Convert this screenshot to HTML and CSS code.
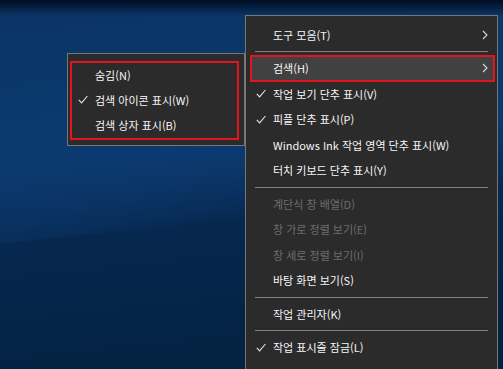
FILE: index.html
```html
<!DOCTYPE html>
<html lang="ko">
<head>
<meta charset="utf-8">
<link rel="stylesheet" href="styles.css">
</head>
<body>
<div class="desktop">
  <div class="beam"></div>

  <div class="menu main-menu">
    <div class="item"><span class="check"></span><span class="label">도구 모음(T)</span><svg class="chev" width="6" height="10" viewBox="0 0 6 10"><polyline points="1,1 5,5 1,9" fill="none" stroke="#d8d8d8" stroke-width="1.1"/></svg></div>
    <div class="sep"></div>
    <div class="item active marked"><span class="check"></span><span class="label">검색(H)</span><svg class="chev" width="6" height="10" viewBox="0 0 6 10"><polyline points="1,1 5,5 1,9" fill="none" stroke="#d8d8d8" stroke-width="1.1"/></svg></div>
    <div class="item"><span class="check"><svg width="10" height="9" viewBox="0 0 10 9"><polyline points="0.8,4.8 3.6,7.8 9.4,1" fill="none" stroke="#dce6f2" stroke-width="1.1"/></svg></span><span class="label">작업 보기 단추 표시(V)</span></div>
    <div class="item"><span class="check"><svg width="10" height="9" viewBox="0 0 10 9"><polyline points="0.8,4.8 3.6,7.8 9.4,1" fill="none" stroke="#dce6f2" stroke-width="1.1"/></svg></span><span class="label">피플 단추 표시(P)</span></div>
    <div class="item"><span class="check"></span><span class="label">Windows Ink 작업 영역 단추 표시(W)</span></div>
    <div class="item"><span class="check"></span><span class="label">터치 키보드 단추 표시(Y)</span></div>
    <div class="sep"></div>
    <div class="item disabled"><span class="check"></span><span class="label">계단식 창 배열(D)</span></div>
    <div class="item disabled"><span class="check"></span><span class="label">창 가로 정렬 보기(E)</span></div>
    <div class="item disabled"><span class="check"></span><span class="label">창 세로 정렬 보기(I)</span></div>
    <div class="item"><span class="check"></span><span class="label">바탕 화면 보기(S)</span></div>
    <div class="sep"></div>
    <div class="item"><span class="check"></span><span class="label">작업 관리자(K)</span></div>
    <div class="sep"></div>
    <div class="item"><span class="check"><svg width="10" height="9" viewBox="0 0 10 9"><polyline points="0.8,4.8 3.6,7.8 9.4,1" fill="none" stroke="#dce6f2" stroke-width="1.1"/></svg></span><span class="label">작업 표시줄 잠금(L)</span></div>
  </div>

  <div class="menu sub-menu">
    <div class="marked-group">
      <div class="item"><span class="check"></span><span class="label">숨김(N)</span></div>
      <div class="item"><span class="check"><svg width="10" height="9" viewBox="0 0 10 9"><polyline points="0.8,4.8 3.6,7.8 9.4,1" fill="none" stroke="#dce6f2" stroke-width="1.1"/></svg></span><span class="label">검색 아이콘 표시(W)</span></div>
      <div class="item"><span class="check"></span><span class="label">검색 상자 표시(B)</span></div>
    </div>
  </div>
</div>
</body>
</html>
```
FILE: styles.css
```css
html, body {
  margin: 0;
  padding: 0;
}
body {
  width: 503px;
  height: 369px;
  overflow: hidden;
  font-family: "Noto Sans CJK KR", sans-serif;
  font-size: 11px;
}
.desktop {
  position: relative;
  width: 503px;
  height: 369px;
  overflow: hidden;
  background:
    linear-gradient(180deg, #020d1f 0px, #041a38 5px, rgba(4, 26, 56, 0) 16px),
    linear-gradient(174deg, #0a3464 0%, #0b3a70 40%, #06284f 58%, #03213f 100%);
}
.beam {
  position: absolute;
  left: -20px;
  top: 60px;
  width: 300px;
  height: 170px;
  background: linear-gradient(170deg, rgba(20, 70, 130, 0) 0%, rgba(15, 60, 115, 0.35) 70%, rgba(15, 60, 115, 0) 100%);
  transform: skewY(-6deg);
}
.menu {
  position: absolute;
  background: #2b2b2b;
  border: 1px solid #767676;
  box-sizing: border-box;
  color: #f6f6f6;
  display: flex;
  flex-direction: column;
}
.main-menu {
  left: 245px;
  top: 15px;
  width: 253px;
  height: 370px;
  padding-top: 6px;
}
.sub-menu {
  left: 67px;
  top: 53px;
  width: 178px;
  height: 93px;
  padding: 7px 5px 0 2px;
}
.item {
  height: 25.5px;
  display: flex;
  align-items: center;
  flex-shrink: 0;
  position: relative;
}
.sub-menu .item {
  height: 25px;
}
.sub-menu .item:first-child {
  margin-top: -1px;
}
.main-menu .item {
  margin: 0 3px 0 5px;
}
.check {
  width: 10px;
  height: 9px;
  margin-left: 5px;
  margin-right: 7px;
  display: flex;
}
.sub-menu .check {
  margin-left: 6px;
  margin-right: 7px;
}
.label {
  flex: 1;
  white-space: nowrap;
}
.chev {
  margin-right: 6px;
}
.sep {
  height: 8px;
  flex-shrink: 0;
  display: flex;
  align-items: center;
  margin: 0 9px;
}
.sep::after {
  content: "";
  flex: 1;
  height: 1px;
  background: #808080;
}
.disabled {
  color: #6d6d6d;
}
.active {
  background: #414141;
}
.marked {
  outline: 2px solid #e3141d;
  outline-offset: -1px;
}
.marked-group {
  border: 2px solid #e3141d;
  height: 79px;
  box-sizing: border-box;
}
```
